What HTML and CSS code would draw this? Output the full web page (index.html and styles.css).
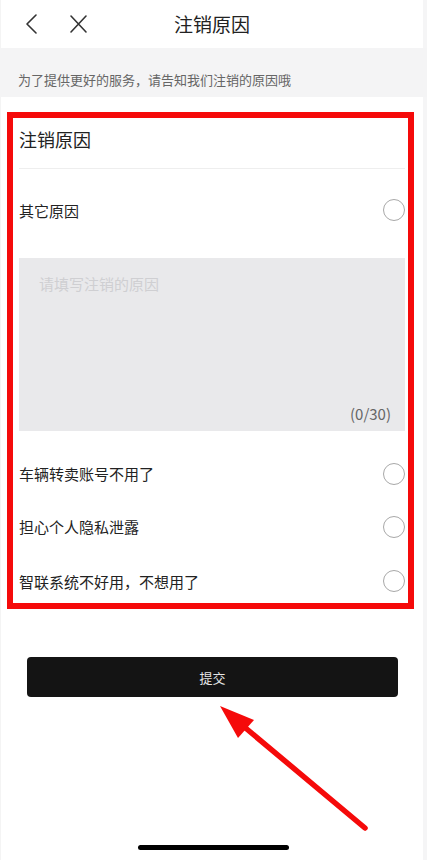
FILE: index.html
```html
<!DOCTYPE html>
<html lang="zh-CN">
<head>
<meta charset="utf-8">
<title>注销原因</title>
<link rel="stylesheet" href="styles.css">
</head>
<body>
<div class="page">
  <header class="topbar">
    <div class="nav-icons">
      <svg class="icon" width="20" height="20" viewBox="0 0 20 20"><polyline points="14,1 5,10 14,19" fill="none" stroke="#333" stroke-width="1.6" stroke-linecap="round" stroke-linejoin="round"/></svg>
      <svg class="icon" width="20" height="20" viewBox="0 0 20 20"><path d="M3 2 L18 18 M18 2 L3 18" fill="none" stroke="#333" stroke-width="1.6" stroke-linecap="round"/></svg>
    </div>
    <h1 class="title">注销原因</h1>
    <div></div>
  </header>
  <div class="notice">为了提供更好的服务，请告知我们注销的原因哦</div>
  <section class="reasons">
    <div class="reasons-head">注销原因</div>
    <div class="option option-other">
      <span>其它原因</span>
      <span class="radio"></span>
    </div>
    <div class="textbox">
      <div class="placeholder">请填写注销的原因</div>
      <div class="counter">(0/30)</div>
    </div>
    <div class="option-list">
      <div class="option">
        <span>车辆转卖账号不用了</span>
        <span class="radio"></span>
      </div>
      <div class="option">
        <span>担心个人隐私泄露</span>
        <span class="radio"></span>
      </div>
      <div class="option option-last">
        <span>智联系统不好用，不想用了</span>
        <span class="radio"></span>
      </div>
    </div>
  </section>
  <div class="actions">
    <button class="submit">提交</button>
  </div>
  <div class="home-bar"></div>
  <svg class="arrow" width="427" height="860" viewBox="0 0 427 860">
    <line x1="365" y1="828" x2="236" y2="720" stroke="#f50a0a" stroke-width="5.5" stroke-linecap="round"/>
    <polygon points="220,706 254,720 238,738" fill="#f50a0a"/>
  </svg>
</div>
</body>
</html>
```
FILE: styles.css
```css
html, body {
  margin: 0;
  padding: 0;
  background: #ffffff;
}
body {
  font-family: "Noto Sans CJK SC", "Noto Sans", sans-serif;
  color: #222;
  overflow: hidden;
}
.page {
  position: relative;
  width: 427px;
  height: 860px;
  box-sizing: border-box;
  border-left: 1px solid #f4f4f4;
  border-right: 4px solid #f5f5f6;
  background: #fff;
}
.topbar {
  height: 48px;
  display: grid;
  grid-template-columns: 1fr auto 1fr;
  align-items: center;
}
.nav-icons {
  display: flex;
  align-items: center;
  gap: 26px;
  padding-left: 21px;
}
.icon {
  display: block;
}
.title {
  margin: 0;
  font-size: 19px;
  font-weight: 400;
  color: #222;
  line-height: 24px;
}
.notice {
  height: 49px;
  box-sizing: border-box;
  background: #f4f4f5;
  display: flex;
  align-items: flex-end;
  padding: 0 0 8px 18px;
  font-size: 13px;
  line-height: 18px;
  color: #666;
  margin-right: -4px;
  margin-left: -1px;
}
.reasons {
  margin: 15px 0 0 6px;
  width: 407px;
  box-sizing: border-box;
  border: 6px solid #f50a0a;
  padding: 0 3px 0 6px;
}
.reasons-head {
  height: 51px;
  box-sizing: border-box;
  padding-bottom: 9px;
  display: flex;
  align-items: center;
  font-size: 18px;
  color: #222;
  border-bottom: 1px solid #eeeeee;
}
.option {
  display: flex;
  align-items: center;
  justify-content: space-between;
  height: 53px;
  font-size: 15px;
  color: #222;
}
.option-other {
  height: 82px;
}
.option-last {
  height: 50px;
  align-items: flex-end;
  padding-bottom: 11px;
  box-sizing: border-box;
}
.radio {
  width: 20px;
  height: 20px;
  border: 1.5px solid #a8a8a8;
  border-radius: 50%;
}
.textbox {
  margin-top: 7px;
  height: 173px;
  box-sizing: border-box;
  background: #e9e9eb;
  display: flex;
  flex-direction: column;
  justify-content: space-between;
  padding: 15px 14px 6px 20px;
}
.placeholder {
  font-size: 15px;
  line-height: 22px;
  color: #cfcfd2;
}
.counter {
  align-self: flex-end;
  font-size: 15px;
  line-height: 22px;
  color: #666;
}
.option-list {
  padding-top: 16px;
}
.actions {
  padding: 48px 0 0 26px;
}
.submit {
  display: block;
  width: 371px;
  height: 40px;
  border: none;
  border-radius: 4px;
  background: #141414;
  color: #e6e6e6;
  font-family: "Noto Sans CJK SC", "Noto Sans", sans-serif;
  font-size: 13px;
  padding: 0;
}
.home-bar {
  margin: 148px 0 0 137px;
  width: 151px;
  height: 5px;
  border-radius: 3px;
  background: #000;
}
.arrow {
  position: absolute;
  left: -1px;
  top: 0;
  pointer-events: none;
}
```
